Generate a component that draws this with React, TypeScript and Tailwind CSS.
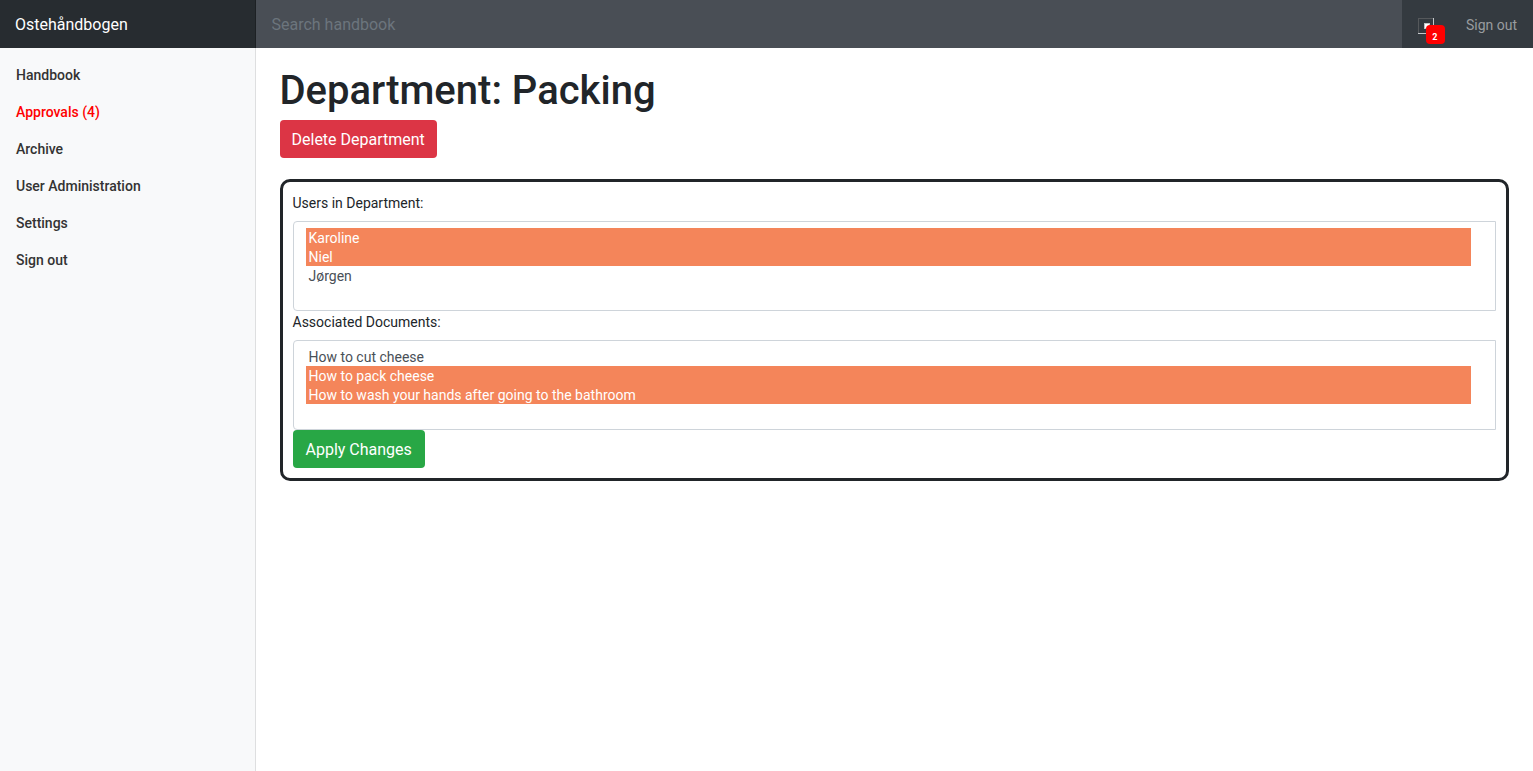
import React from "react";

interface NavItem {
  label: string;
  alert?: boolean;
}

const navItems: NavItem[] = [
  { label: "Handbook" },
  { label: "Approvals (4)", alert: true },
  { label: "Archive" },
  { label: "User Administration" },
  { label: "Settings" },
  { label: "Sign out" },
];

const users = ["Karoline", "Niel", "Jørgen"];
const documents = [
  "How to cut cheese",
  "How to pack cheese",
  "How to wash your hands after going to the bathroom",
];

// The browser forces its own colours on checked options, so the highlight is
// painted with a gradient and the text with a fill colour.
const optionClass =
  "h-[19px] min-h-[19px] pt-[2px] pb-0 pl-[3px] checked:bg-[linear-gradient(#f4855a,#f4855a)] checked:[-webkit-text-fill-color:#ffffff]";

function MultiSelect({
  id,
  label,
  options,
  selected,
}: {
  id: string;
  label: string;
  options: string[];
  selected: string[];
}) {
  return (
    <div>
      <label htmlFor={id} className="mb-[6px] block leading-[23px]">
        {label}
      </label>
      <select
        id={id}
        multiple
        size={4}
        defaultValue={selected}
        className="block h-[90px] w-full appearance-none overflow-hidden rounded-l-[4px] rounded-r-none border border-[#ced4da] bg-white py-[6px] pr-6 pl-3 text-sm text-[#495057]"
      >
        {options.map((option) => (
          <option key={option} value={option} className={optionClass}>
            {option}
          </option>
        ))}
      </select>
    </div>
  );
}

function NotificationIcon() {
  return (
    <svg width="16" height="16" viewBox="0 0 16 16" shapeRendering="crispEdges" aria-hidden="true">
      <path d="M0 0h15v1H1v14H0z" fill="#55585b" />
      <path d="M15 0h1v16H0v-1h15z" fill="#c4c7ca" />
      <path d="M6 5h6v6H6z" fill="#c0c2c4" />
      <path d="M7 6h4v4H7z" fill="#ffffff" />
    </svg>
  );
}

export default function App() {
  return (
    <div className="flex min-h-screen flex-col bg-white font-[Roboto,sans-serif] text-sm leading-[21px] text-[#212529]">
      <header className="flex h-12 bg-[#343a40]">
        <a
          href="#"
          className="flex w-1/6 shrink-0 items-center bg-[#272c30] px-[15px] pt-[2px] text-base text-white shadow-[inset_-1px_0_0_rgba(0,0,0,0.25)]"
        >
          Ostehåndbogen
        </a>
        <input
          type="text"
          aria-label="Search handbook"
          placeholder="Search handbook"
          className="min-w-0 flex-1 bg-[#494e55] px-4 pt-[2px] text-base text-white outline-none placeholder:text-[#6c757d]"
        />
        <nav className="flex items-center">
          <button type="button" aria-label="Notifications" className="relative ml-4 mt-1">
            <NotificationIcon />
            <span className="absolute top-[7px] left-2 flex h-[19px] w-[19px] items-center justify-center rounded-[4px] bg-[#ff0000] pt-[5px] pr-px text-[9px] leading-none font-bold text-white">
              2
            </span>
          </button>
          <a href="#" className="mt-[2px] ml-4 px-4 text-[#999c9f]">
            Sign out
          </a>
        </nav>
      </header>

      <div className="flex flex-1">
        <nav className="w-1/6 shrink-0 bg-[#f8f9fa] pt-[9px] shadow-[inset_-1px_0_0_rgba(0,0,0,0.1)]">
          <ul>
            {navItems.map((item) => (
              <li key={item.label}>
                <a
                  href="#"
                  className={`block px-4 py-2 font-medium ${item.alert ? "text-[#ff0000]" : "text-[#333333]"}`}
                >
                  {item.label}
                </a>
              </li>
            ))}
          </ul>
        </nav>

        <main className="min-w-0 flex-1 px-6 pt-4">
          <h1 className="mb-[2px] text-[40px] leading-[54px] font-medium">Department: Packing</h1>
          <button
            type="button"
            className="block h-[38px] rounded-[4px] bg-[#dc3545] px-3 pt-[2px] text-base text-white"
          >
            Delete Department
          </button>
          <form
            className="mt-[21px] rounded-[10px] border-3 border-[#212529] p-[10px]"
            onSubmit={(event) => event.preventDefault()}
          >
            <MultiSelect
              id="users"
              label="Users in Department:"
              options={users}
              selected={users.slice(0, 2)}
            />
            <MultiSelect
              id="documents"
              label="Associated Documents:"
              options={documents}
              selected={documents.slice(1)}
            />
            <button
              type="submit"
              className="block h-[38px] rounded-[4px] bg-[#28a745] px-[13px] pt-[2px] text-base text-white"
            >
              Apply Changes
            </button>
          </form>
        </main>
      </div>
    </div>
  );
}
